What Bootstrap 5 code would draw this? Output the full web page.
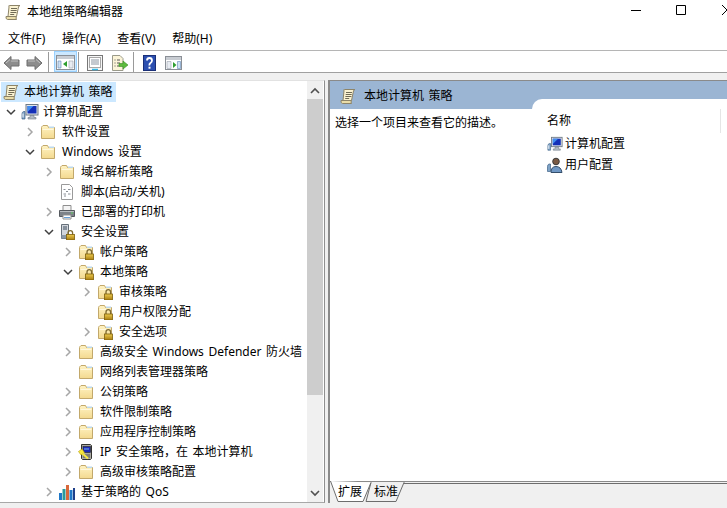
<!DOCTYPE html>
<html lang="zh-CN">
<head>
<meta charset="utf-8">
<title>本地组策略编辑器</title>
<link href="https://cdn.jsdelivr.net/npm/bootstrap@5.3.0/dist/css/bootstrap.min.css" rel="stylesheet">
<style>
html,body{width:727px;height:508px;overflow:hidden;margin:0}
body{background:#f0f0f0;font:12px/20px "Noto Sans","Noto Sans CJK SC",sans-serif;color:#000;word-spacing:1.5px}
.app-shell{width:727px;height:508px}
.title-row{height:28px;background:#fff;padding:0 0 5px 5px}
.title-text{margin-left:6px;line-height:20px}
.win-ctrls{margin-left:auto;margin-bottom:3px}
.win-ctrls svg{display:block}
.menu-row{height:23px;background:#fff;border-bottom:1px solid #b5b5b5;padding-left:8px;gap:16.5px}
.tool-row{height:22px;background:#fff;padding-left:3px;border-bottom:1px solid #a0a0a0}
.tool-row svg{display:block}
.tool-row>svg{margin-top:2px}
.tool-sep{width:1px;height:20px;background:#9a9a9a}
.sep-a{margin:0 5px}.sep-b{margin:0 8px 0 1px}.sep-c{margin:0 9px 0 5px}
.gap-arrow{margin-left:6px}.gap-exp{margin-left:8px}.gap-act{margin-left:9px}
.tool-on{background:#cce8ff;border:1px solid #99d1ff;width:23px;height:21px;display:flex;align-items:center;justify-content:center;padding-top:1px}
.work-row{height:423px;margin-top:7px}
.tree-pane{width:325px;height:423px;background:#fff;border-right:1px solid #8f8f8f;border-bottom:1px solid #a8a8a8;border-top:1px solid #e2e2e2;padding-right:1px}
.tree-list{width:307px;overflow:hidden;white-space:nowrap;padding-top:1px}
.tree-item{height:20px;align-items:center}
.tree-item svg{flex:none;display:block}
.lv0{padding-left:3px}.lv1{padding-left:22px}.lv2{padding-left:41px}.lv3{padding-left:60px}.lv4{padding-left:79px}
.chev{width:16px;height:16px;flex:none}
.t-ico{margin-left:2px}
.t-txt{margin-left:6px}
.ico-lg{margin-left:2px;margin-right:-2px}
.root-sel{background:#cce8ff;width:115px;margin-left:1px;padding-left:2px;height:20px;align-items:center}
.root-sel .t-txt{margin-left:5px}
.scroll-track{width:16px;background:#f0f0f0}
.scroll-btn{height:18px;display:flex;align-items:center;justify-content:center;padding-top:2px}
.scroll-btn-end{height:18px;display:flex;align-items:center;justify-content:center}
.scroll-thumb{height:296px;background:#cdcdcd}
.detail-pane{width:399px;height:423px;margin-left:3px;background:#fff;border-left:2px solid #8a8a8a;border-top:1px solid #8a8a8a}
.detail-head{height:28px;background:#9bb5d3;padding:2px 0 0 10px;align-items:center}
.detail-body{height:372px}
.desc-col{width:202px;padding:4px 0 0 5px;line-height:20px}
.list-col{flex:1;margin-top:-10px;background:#fff;border-top-left-radius:10px;padding:10px 0 0 15px}
.list-head{height:24px;line-height:24px;border-right:1px solid #e5e5e5;margin-right:6px}
.list-item{height:21px;align-items:center}
.list-item span{margin-left:2px}
.tab-strip{height:22px;background:#f0f0f0}
.tab-strip svg{display:block;position:absolute;left:0;top:0}
.tab-wrap{position:relative;height:22px}
.tab-lbl{position:absolute;top:1px;line-height:20px}
.tab-a{left:8px}.tab-b{left:44px}
</style>
</head>
<body>
<svg width="0" height="0" class="d-block position-absolute">
<defs>
<linearGradient id="fg" x1="0" y1="0" x2="0" y2="1"><stop offset="0" stop-color="#fff3c4"/><stop offset="1" stop-color="#f3d98f"/></linearGradient>
<linearGradient id="lk" x1="0" y1="0" x2="0" y2="1"><stop offset="0" stop-color="#ecca4e"/><stop offset="1" stop-color="#a87c10"/></linearGradient>
<symbol id="i-scroll" viewBox="0 0 16 16">
<path d="M4.500 1.500Q3.500 1 4 3L3 12.500H11.500L13.500 3Q14 1.500 15 1.500z" fill="#fbf3d2" stroke="#8d8468"/>
<path d="M1 12.500H11.500Q10.500 14 11.500 15.500H2.500Q.5 15 1 12.500z" fill="#e9dca8" stroke="#8d8468"/>
<path d="M6 4.500h6M5.700 6.500h6M5.400 8.500h6M5.200 10.500h4" stroke="#6f6a55"/>
</symbol>
<symbol id="i-folder" viewBox="0 0 16 16">
<path d="M1.500 3.500V14.500H14.500V3.500H8.500L7.500 1.500H3L1.500 3z" fill="url(#fg)" stroke="#c2a86b"/>
<path d="M9 2.500h5v1.500H9z" fill="#bcd9ee"/>
<path d="M2.500 5.500h11" stroke="#fff8dd"/>
</symbol>
<symbol id="i-lockf" viewBox="0 0 16 16">
<use href="#i-folder" width="16" height="16"/>
<path d="M9 10v-2a2.300 2.300 0 0 1 4.600 0v2" fill="none" stroke="#7d6a32" stroke-width="1.300"/>
<rect x="7.500" y="10" width="8" height="6" fill="url(#lk)" stroke="#7d5f0c" stroke-width=".8"/>
</symbol>
<symbol id="i-pc" viewBox="0 0 18 18">
<path d="M2.500 8.500Q1 9 1 11v5h3V8.500z" fill="#7fa3c6" stroke="#3f6288" stroke-width=".7"/>
<path d="M2 10.500v4" stroke="#fff"/>
<rect x="5" y="1.500" width="12" height="10.500" fill="#e2e6ea" stroke="#6e7a86"/>
<rect x="6.500" y="3" width="9" height="7.500" fill="#1430b8"/>
<path d="M6.500 3h6l-6 6z" fill="#3f8ef0"/>
<path d="M9 12.500h4v2h2v1.500H7V14.500h2z" fill="#b4bcc4" stroke="#6e7a86" stroke-width=".6"/>
</symbol>
<symbol id="i-user" viewBox="0 0 16 16">
<path d="M2 7Q.5 7.500.5 9.500v5h3V7z" fill="#7fa3c6" stroke="#3f6288" stroke-width=".7"/>
<circle cx="9" cy="4.500" r="3.300" fill="#7a5a44" stroke="#3a3a3a"/>
<path d="M4 15.500q0-6 5-6t6 6z" fill="#6f97c4" stroke="#344e6b"/>
</symbol>
<symbol id="i-script" viewBox="0 0 16 16">
<path d="M2.500 .5H10.500L13.500 3.500V15.500H2.500z" fill="#fff" stroke="#9a9a9a"/>
<path d="M4.500 5.500h2M9 5.500h2.500M7 7.500h2M4.500 10h2.500M9 10h2.500M5 12h2" stroke="#8a8f96"/>
</symbol>
<symbol id="i-printer" viewBox="0 0 16 16">
<path d="M4 1.500h8v5H4z" fill="#f4f4f4" stroke="#8f8f8f"/>
<path d="M.5 6.500h15v6H.5z" fill="#7d8288" stroke="#55595e"/>
<path d="M1 7.500h14" stroke="#b8bcc0"/>
<path d="M4 11h8v4H4z" fill="#fff" stroke="#8f8f8f"/>
<path d="M12 9h2" stroke="#5fd35f"/>
<path d="M5 13.500h6" stroke="#66a0d8"/>
</symbol>
<symbol id="i-sec" viewBox="0 0 16 16">
<path d="M2.500 .5H9.500V14.500H2.500z" fill="#d2d6dc" stroke="#66707a"/>
<path d="M4 3h4M4 5h4" stroke="#3a4a5c"/>
<path d="M2.500 11h5v3.500h-5z" fill="#8b99a8"/>
<path d="M9 11v-2a2.300 2.300 0 0 1 4.600 0v2" fill="none" stroke="#7d6a32" stroke-width="1.300"/>
<rect x="7.500" y="10.500" width="8" height="5.500" fill="url(#lk)" stroke="#7d5f0c" stroke-width=".8"/>
</symbol>
<symbol id="i-ip" viewBox="0 0 16 16">
<path d="M3.500 .5h9l1 1v13l-1 1h-8l-1-1z" fill="#a9a9a2" stroke="#33332f"/>
<rect x="5" y="2.500" width="7.500" height="6" fill="#1b2ab8" stroke="#222" stroke-width=".6"/>
<path d="M6 5h5" stroke="#7bb8f0"/>
<path d="M5 11h7M5 13h7" stroke="#55554f"/>
<path d="M.5 7.500L4 5l2.500 3.500L3 11z" fill="#f7e840" stroke="#b49b08" stroke-width=".6"/>
<path d="M4.500 9.500 10 14.500" stroke="#f7e840" stroke-width="2"/>
</symbol>
<symbol id="i-chart" viewBox="0 0 16 16">
<rect x="0" y="9" width="3" height="7" fill="#1f78c8"/>
<rect x="3.500" y="5" width="3" height="11" fill="#2a9a9a"/>
<rect x="7" y="1" width="3" height="15" fill="#d8683a"/>
<rect x="10.500" y="6" width="3" height="10" fill="#1f78c8"/>
<rect x="14" y="4" width="2" height="12" fill="#1e3f8a"/>
</symbol>
<symbol id="c-r" viewBox="0 0 16 16"><path d="M6 4l4 4-4 4" fill="none" stroke="#a6a6a6" stroke-width="1.500"/></symbol>
<symbol id="c-d" viewBox="0 0 16 16"><path d="M4 6l4 4 4-4" fill="none" stroke="#404040" stroke-width="1.500"/></symbol>
</defs>
</svg>

<div class="app-shell d-flex flex-column">
  <div class="title-row d-flex align-items-center">
    <svg width="16" height="16"><use href="#i-scroll"/></svg>
    <span class="title-text">本地组策略编辑器</span>
    <div class="win-ctrls d-flex align-items-center">
      <svg width="45" height="16"><path d="M0 8.500h10" stroke="#000"/></svg>
      <svg width="45" height="16"><path d="M.5 3.500h9v9h-9z" fill="none" stroke="#000"/></svg>
      <svg width="6" height="16"><path d="M1 3l5 5-5 5" fill="none" stroke="#000"/></svg>
    </div>
  </div>
  <div class="menu-row d-flex align-items-center">
    <span>文件(F)</span><span>操作(A)</span><span>查看(V)</span><span>帮助(H)</span>
  </div>
  <div class="tool-row d-flex align-items-center">
    <svg width="17" height="16" viewBox="0 0 17 16"><path d="M1 8l7-6.500v3.500h8v6H8v3.500z" fill="#8d8d8d" stroke="#6e6e6e"/><path d="M3 8l4-3.500M8 6h7" stroke="#c4c4c4"/></svg>
    <svg class="gap-arrow" width="17" height="16" viewBox="0 0 17 16"><path d="M16 8L9 1.500v3.500H1v6h8v3.500z" fill="#8d8d8d" stroke="#6e6e6e"/><path d="M2 6h7M10 4.500l4 3.500" stroke="#c4c4c4"/></svg>
    <span class="tool-sep sep-a"></span>
    <span class="tool-on"><svg width="19" height="15" viewBox="0 0 19 15"><rect x=".5" y=".5" width="18" height="14" fill="#fff" stroke="#8a8f96"/><path d="M1 1h17v3H1z" fill="#c8ccd2"/><path d="M2 6h3v7H2z" fill="#cfe0f2" stroke="#5f86b5" stroke-width=".6"/><path d="M11 6v6l-4-3z" fill="#2f9e2f"/><path d="M13 6h4v7h-4z" fill="#e8ecf2" stroke="#9aa2ac" stroke-width=".6"/></svg></span>
    <span class="tool-sep sep-b"></span>
    <svg width="16" height="16" viewBox="0 0 16 16"><rect x=".5" y=".5" width="15" height="15" fill="#f6f6f6" stroke="#777"/><rect x="2.500" y="2.500" width="11" height="10" fill="#fff" stroke="#a8a8a8"/><path d="M4 5h8M4 7h8M4 9h8" stroke="#8a94a0"/><path d="M5 14.500h6" stroke="#37b8e6" stroke-width="1.500"/></svg>
    <svg class="gap-exp" width="17" height="16" viewBox="0 0 17 16"><path d="M1.500 .5H9L12 3.500V15.500H1.500z" fill="#fbf4d8" stroke="#9a9a8a"/><path d="M3.500 5h1M6 5h3M3.500 8h1M6 8h3M3.500 11h1M6 11h2" stroke="#555"/><path d="M8 8.500h4V6l5 4-5 4v-2.500H8z" fill="#5dbb3e" stroke="#3c8f26" stroke-width=".6"/></svg>
    <span class="tool-sep sep-c"></span>
    <svg width="13" height="16" viewBox="0 0 13 16"><rect width="13" height="16" fill="#2c4fb0"/><rect x=".5" y=".5" width="12" height="15" fill="none" stroke="#1a2f78"/><path d="M4 5.500Q4 3 6.500 3T9 5.500Q9 7 7.500 8T6.500 10.500" fill="none" stroke="#fff" stroke-width="1.800"/><path d="M5.500 11.700h2v2h-2z" fill="#fff"/></svg>
    <svg class="gap-act" width="17" height="14" viewBox="0 0 17 14"><rect x=".5" y=".5" width="16" height="13" fill="#fff" stroke="#8a8f96"/><path d="M1 1h15v3H1z" fill="#c8ccd2"/><path d="M2 5.500h4v7H2z" fill="#e8ecf2" stroke="#9aa2ac" stroke-width=".6"/><path d="M8 6v6l3.500-3z" fill="#2f9e2f"/><path d="M12.500 5.500h3v7h-3z" fill="#cfe0f2" stroke="#5f86b5" stroke-width=".6"/></svg>
  </div>
  <div class="work-row d-flex">
    <div class="tree-pane d-flex">
      <div class="tree-list">
        <div class="root-sel d-flex"><svg width="16" height="16"><use href="#i-scroll"/></svg><span class="t-txt">本地计算机 策略</span></div>
        <div class="tree-item d-flex lv0"><svg class="chev"><use href="#c-d"/></svg><svg class="ico-lg" width="18" height="18"><use href="#i-pc"/></svg><span class="t-txt">计算机配置</span></div>
        <div class="tree-item d-flex lv1"><svg class="chev"><use href="#c-r"/></svg><svg class="t-ico" width="16" height="16"><use href="#i-folder"/></svg><span class="t-txt">软件设置</span></div>
        <div class="tree-item d-flex lv1"><svg class="chev"><use href="#c-d"/></svg><svg class="t-ico" width="16" height="16"><use href="#i-folder"/></svg><span class="t-txt">Windows 设置</span></div>
        <div class="tree-item d-flex lv2"><svg class="chev"><use href="#c-r"/></svg><svg class="t-ico" width="16" height="16"><use href="#i-folder"/></svg><span class="t-txt">域名解析策略</span></div>
        <div class="tree-item d-flex lv2"><span class="chev"></span><svg class="t-ico" width="16" height="16"><use href="#i-script"/></svg><span class="t-txt">脚本(启动/关机)</span></div>
        <div class="tree-item d-flex lv2"><svg class="chev"><use href="#c-r"/></svg><svg class="t-ico" width="16" height="16"><use href="#i-printer"/></svg><span class="t-txt">已部署的打印机</span></div>
        <div class="tree-item d-flex lv2"><svg class="chev"><use href="#c-d"/></svg><svg class="t-ico" width="16" height="16"><use href="#i-sec"/></svg><span class="t-txt">安全设置</span></div>
        <div class="tree-item d-flex lv3"><svg class="chev"><use href="#c-r"/></svg><svg class="t-ico" width="16" height="16"><use href="#i-lockf"/></svg><span class="t-txt">帐户策略</span></div>
        <div class="tree-item d-flex lv3"><svg class="chev"><use href="#c-d"/></svg><svg class="t-ico" width="16" height="16"><use href="#i-lockf"/></svg><span class="t-txt">本地策略</span></div>
        <div class="tree-item d-flex lv4"><svg class="chev"><use href="#c-r"/></svg><svg class="t-ico" width="16" height="16"><use href="#i-lockf"/></svg><span class="t-txt">审核策略</span></div>
        <div class="tree-item d-flex lv4"><span class="chev"></span><svg class="t-ico" width="16" height="16"><use href="#i-lockf"/></svg><span class="t-txt">用户权限分配</span></div>
        <div class="tree-item d-flex lv4"><svg class="chev"><use href="#c-r"/></svg><svg class="t-ico" width="16" height="16"><use href="#i-lockf"/></svg><span class="t-txt">安全选项</span></div>
        <div class="tree-item d-flex lv3"><svg class="chev"><use href="#c-r"/></svg><svg class="t-ico" width="16" height="16"><use href="#i-folder"/></svg><span class="t-txt">高级安全 Windows Defender 防火墙</span></div>
        <div class="tree-item d-flex lv3"><span class="chev"></span><svg class="t-ico" width="16" height="16"><use href="#i-folder"/></svg><span class="t-txt">网络列表管理器策略</span></div>
        <div class="tree-item d-flex lv3"><svg class="chev"><use href="#c-r"/></svg><svg class="t-ico" width="16" height="16"><use href="#i-folder"/></svg><span class="t-txt">公钥策略</span></div>
        <div class="tree-item d-flex lv3"><svg class="chev"><use href="#c-r"/></svg><svg class="t-ico" width="16" height="16"><use href="#i-folder"/></svg><span class="t-txt">软件限制策略</span></div>
        <div class="tree-item d-flex lv3"><svg class="chev"><use href="#c-r"/></svg><svg class="t-ico" width="16" height="16"><use href="#i-folder"/></svg><span class="t-txt">应用程序控制策略</span></div>
        <div class="tree-item d-flex lv3"><svg class="chev"><use href="#c-r"/></svg><svg class="t-ico" width="16" height="16"><use href="#i-ip"/></svg><span class="t-txt">IP 安全策略，在 本地计算机</span></div>
        <div class="tree-item d-flex lv3"><svg class="chev"><use href="#c-r"/></svg><svg class="t-ico" width="16" height="16"><use href="#i-folder"/></svg><span class="t-txt">高级审核策略配置</span></div>
        <div class="tree-item d-flex lv2"><svg class="chev"><use href="#c-r"/></svg><svg class="t-ico" width="16" height="16"><use href="#i-chart"/></svg><span class="t-txt">基于策略的 QoS</span></div>
      </div>
      <div class="scroll-track d-flex flex-column">
        <div class="scroll-btn"><svg width="16" height="16" viewBox="0 0 16 16"><path d="M4 10l4-4 4 4" fill="none" stroke="#505050" stroke-width="1.600"/></svg></div>
        <div class="scroll-thumb"></div>
        <div class="scroll-btn-end mt-auto"><svg width="16" height="16" viewBox="0 0 16 16"><path d="M4 6l4 4 4-4" fill="none" stroke="#505050" stroke-width="1.600"/></svg></div>
      </div>
    </div>
    <div class="detail-pane d-flex flex-column">
      <div class="detail-head d-flex"><svg width="16" height="16"><use href="#i-scroll"/></svg><span class="ms-2">本地计算机 策略</span></div>
      <div class="detail-body d-flex">
        <div class="desc-col">选择一个项目来查看它的描述。</div>
        <div class="list-col">
          <div class="list-head">名称</div>
          <div class="list-item d-flex"><svg width="16" height="16"><use href="#i-pc"/></svg><span>计算机配置</span></div>
          <div class="list-item d-flex"><svg width="16" height="16"><use href="#i-user"/></svg><span>用户配置</span></div>
        </div>
      </div>
      <div class="tab-strip">
        <div class="tab-wrap">
          <svg width="398" height="22" viewBox="0 0 398 22"><path d="M0 0.500H398" stroke="#8a8a8a"/><path d="M.5 0L8 20.500H33L41 1.500" fill="#fff" stroke="#6d6d6d"/><path d="M41 1.500L36 20.500H66L74 1.500V2.500H398" fill="none" stroke="#6d6d6d"/></svg>
          <span class="tab-lbl tab-a">扩展</span><span class="tab-lbl tab-b">标准</span>
        </div>
      </div>
    </div>
  </div>
</div>
</body>
</html>
